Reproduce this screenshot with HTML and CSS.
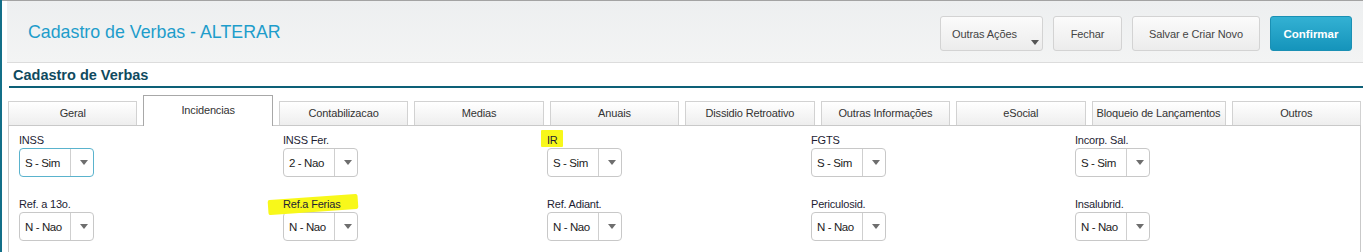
FILE: index.html
```html
<!DOCTYPE html>
<html lang="pt-BR">
<head>
<meta charset="utf-8">
<title>Cadastro de Verbas - ALTERAR</title>
<link rel="stylesheet" href="styles.css">
</head>
<body>
<div class="shell">
  <div class="rail"></div>
  <div class="main">
    <header class="topbar">
      <h1 class="page-title">Cadastro de Verbas - ALTERAR</h1>
      <div class="actions">
        <button class="btn btn-menu">Outras Ações<span class="caret"></span></button>
        <button class="btn btn-close">Fechar</button>
        <button class="btn btn-save">Salvar e Criar Novo</button>
        <button class="btn btn-primary">Confirmar</button>
      </div>
    </header>

    <div class="section-title">Cadastro de Verbas</div>

    <div class="tabs">
      <div class="tab">Geral</div>
      <div class="tab active">Incidencias</div>
      <div class="tab">Contabilizacao</div>
      <div class="tab">Medias</div>
      <div class="tab">Anuais</div>
      <div class="tab">Dissidio Retroativo</div>
      <div class="tab">Outras Informações</div>
      <div class="tab">eSocial</div>
      <div class="tab tab-wide">Bloqueio de Lançamentos</div>
      <div class="tab">Outros</div>
    </div>

    <div class="panel">
      <div class="fields">
        <div class="field">
          <span class="label">INSS</span>
          <div class="select focused"><span class="value">S - Sim</span><span class="arrow"></span></div>
        </div>
        <div class="field">
          <span class="label">INSS Fer.</span>
          <div class="select"><span class="value">2 - Nao</span><span class="arrow"></span></div>
        </div>
        <div class="field">
          <span class="label mark-ir">IR</span>
          <div class="select"><span class="value">S - Sim</span><span class="arrow"></span></div>
        </div>
        <div class="field">
          <span class="label">FGTS</span>
          <div class="select"><span class="value">S - Sim</span><span class="arrow"></span></div>
        </div>
        <div class="field">
          <span class="label">Incorp. Sal.</span>
          <div class="select"><span class="value">S - Sim</span><span class="arrow"></span></div>
        </div>

        <div class="field">
          <span class="label">Ref. a 13o.</span>
          <div class="select"><span class="value">N - Nao</span><span class="arrow"></span></div>
        </div>
        <div class="field">
          <span class="label mark-ferias">Ref.a Ferias</span>
          <div class="select"><span class="value">N - Nao</span><span class="arrow"></span></div>
        </div>
        <div class="field">
          <span class="label">Ref. Adiant.</span>
          <div class="select"><span class="value">N - Nao</span><span class="arrow"></span></div>
        </div>
        <div class="field">
          <span class="label">Periculosid.</span>
          <div class="select"><span class="value">N - Nao</span><span class="arrow"></span></div>
        </div>
        <div class="field">
          <span class="label">Insalubrid.</span>
          <div class="select"><span class="value">N - Nao</span><span class="arrow"></span></div>
        </div>
      </div>
    </div>
  </div>
</div>
</body>
</html>
```

FILE: styles.css
```css
* { box-sizing: border-box; }

html, body {
  margin: 0;
  padding: 0;
  background: #ffffff;
  font-family: "Liberation Sans", Arial, sans-serif;
  color: #222;
  overflow: hidden;
}

.shell {
  display: flex;
  width: 1363px;
  height: 252px;
  overflow: hidden;
}

.rail {
  width: 2px;
  flex: 0 0 2px;
  background: #136f88;
}

.main {
  flex: 1;
  padding-left: 5px;
  border-top: 1px solid #a3a3a3;
}

/* ---------- header ---------- */
.topbar {
  display: flex;
  align-items: center;
  justify-content: space-between;
  padding: 15px 11px 11px 21px;
  background: linear-gradient(#edeff0, #f3f4f4);
  border-bottom: 1px solid #dcdcdc;
}

.page-title {
  margin: 0 0 2px 0;
  font-weight: normal;
  font-size: 17.8px;
  line-height: 21px;
  color: #1e9dcb;
}

.actions {
  display: flex;
  gap: 10px;
}

.btn {
  position: relative;
  height: 35px;
  padding: 0;
  border: 1px solid #d3d3d3;
  border-radius: 3px;
  background: linear-gradient(#fbfbfb, #ececec);
  font-family: "Liberation Sans", Arial, sans-serif;
  font-size: 11px;
  letter-spacing: -0.1px;
  color: #444;
  text-align: center;
}

.btn-menu { width: 103px; text-align: left; padding-left: 11px; }
.btn-close { width: 69px; }
.btn-save { width: 128px; }

.btn-primary {
  width: 82px;
  border-color: #1a90b4;
  background: linear-gradient(#33b1d3, #1594bb);
  color: #ffffff;
  font-weight: bold;
  font-size: 11.5px;
  letter-spacing: 0;
}

.caret {
  position: absolute;
  right: 3px;
  bottom: 5px;
  width: 0;
  height: 0;
  border-left: 4.5px solid transparent;
  border-right: 4.5px solid transparent;
  border-top: 5px solid #555;
}

/* ---------- section title ---------- */
.section-title {
  margin-left: 2px;
  padding: 4px 0 2px 4px;
  font-weight: bold;
  font-size: 14.5px;
  line-height: 17px;
  color: #0f4a5e;
  border-bottom: 2px solid #0d6077;
}

/* ---------- tabs ---------- */
.tabs {
  display: flex;
  align-items: flex-end;
  gap: 6px;
  height: 30px;
  margin: 7px 2px 0 1px;
}

.tab {
  flex: 1 1 0;
  min-width: 0;
  height: 24px;
  padding: 0 2px;
  display: flex;
  align-items: center;
  justify-content: center;
  border: 1px solid #d2d2d2;
  border-bottom: none;
  background: linear-gradient(#ffffff, #eeeeee);
  font-size: 11px;
  letter-spacing: -0.15px;
  line-height: 13px;
  color: #333;
  white-space: nowrap;
}

.tab-wide {
  flex: 0 0 134px;
}

.tab.active {
  height: 31px;
  margin-bottom: -1px;
  align-items: flex-start;
  padding-top: 8px;
  background: #ffffff;
  border-color: #a8a8a8;
  position: relative;
  z-index: 1;
}

/* ---------- panel ---------- */
.panel {
  margin: 0 2px 0 1px;
  height: 127px;
  padding: 8px 0 0 10px;
  border: 1px solid #c9c9c9;
  border-bottom: none;
  background: #ffffff;
}

.fields {
  display: grid;
  grid-template-columns: repeat(5, 264px);
  row-gap: 21px;
}

.field {
  display: flex;
  flex-direction: column;
  align-items: flex-start;
}

.label {
  position: relative;
  z-index: 0;
  display: block;
  margin-bottom: 2px;
  font-size: 11px;
  line-height: 12px;
  letter-spacing: -0.2px;
  color: #1d1d33;
}

.mark-ir::before,
.mark-ferias::before {
  content: "";
  position: absolute;
  z-index: -1;
  background: #f8f81a;
}

.mark-ir::before {
  left: -6px;
  top: -4px;
  width: 22px;
  height: 17px;
  border-radius: 1px;
}

.mark-ferias::before {
  left: -15px;
  top: -1px;
  width: 90px;
  height: 15px;
  transform: rotate(-4deg);
  border-radius: 2px;
}

.select {
  display: flex;
  width: 75px;
  height: 29px;
  border: 1px solid #c8c8c8;
  border-radius: 4px;
  background: #ffffff;
}

.select.focused {
  border-color: #5ab3cd;
}

.value {
  width: 50px;
  padding-left: 5px;
  display: flex;
  align-items: center;
  font-size: 11.5px;
  letter-spacing: -0.4px;
  color: #222;
  white-space: nowrap;
}

.arrow {
  flex: 1;
  display: flex;
  align-items: center;
  justify-content: center;
  padding-left: 3px;
  border-left: 1px solid #cfcfcf;
}

.arrow::after {
  content: "";
  width: 0;
  height: 0;
  border-left: 4px solid transparent;
  border-right: 4px solid transparent;
  border-top: 5px solid #6e6e6e;
}
```
